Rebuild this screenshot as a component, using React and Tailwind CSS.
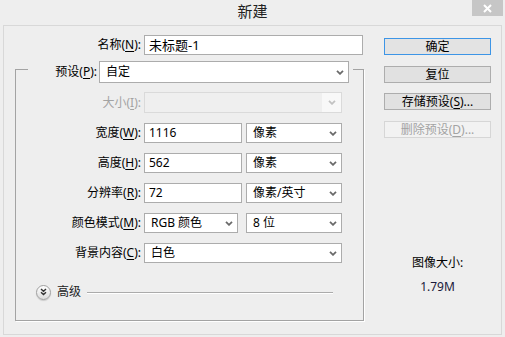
import React from "react";

const Chevron = ({ c = "#6a6a6a" }) => (
  <svg width="8" height="5" viewBox="0 0 8 5" className="shrink-0">
    <path d="M1 0.8L4 3.8L7 0.8" fill="none" stroke={c} strokeWidth="1.8" />
  </svg>
);

const Input = ({ w, children }) => (
  <div className={`h-[20px] ${w} border border-[#acacac] bg-white flex items-center pl-[4px] text-black`}>
    {children}
  </div>
);

const Select = ({ w, h = "h-[20px]", children }) => (
  <div className={`${h} ${w} border border-[#acacac] bg-white flex items-center justify-between pl-[6px] pr-[4px] text-black`}>
    <span>{children}</span>
    <Chevron />
  </div>
);

const Row = ({ label, children, mt = "mt-[10px]", disabled = false, h = "h-[20px]" }) => (
  <div className={`flex items-center ${h} ${mt}`}>
    <div className={`w-[125px] text-right shrink-0 ${disabled ? "text-[#a3a3a3]" : "text-black"}`}>{label}</div>
    <div className="ml-[3px] flex items-center">{children}</div>
  </div>
);

const U = ({ children }) => <u className="underline underline-offset-2">{children}</u>;

export default function App() {
  return (
    <div className="w-[505px] h-[337px] bg-[#eeeeee] flex flex-col text-[12px] leading-none font-['Noto_Sans','Noto_Sans_CJK_SC',sans-serif] text-black overflow-hidden">
      {/* title bar */}
      <div className="grid grid-cols-[1fr_auto_1fr] h-[25px] shrink-0">
        <div />
        <div className="self-center text-[15px] text-[#222] pb-[2px]">新建</div>
        <div className="justify-self-end self-start mr-[2px] w-[31px] h-[16px] bg-[#c6c6c6] flex items-center justify-center">
          <svg width="9" height="9" viewBox="0 0 9 9">
            <path d="M1 1L8 8M8 1L1 8" stroke="#ffffff" strokeWidth="2" />
          </svg>
        </div>
      </div>

      {/* frame */}
      <div className="mx-[3px] h-[310px] border border-[#d8d8d8] flex">
        {/* left column */}
        <div className="w-[360px] pl-[11px] pt-[9px] flex flex-col shrink-0">
          <div className="flex items-center h-[20px]">
            <div className="w-[126px] text-right shrink-0">名称(<U>N</U>):</div>
            <div className="ml-[3px]">
              <Input w="w-[219px]">
                <span className="text-[13px]">未标题-1</span>
              </Input>
            </div>
          </div>

          {/* group box */}
          <div className="mt-[14px] border border-[#a3a3a3] shadow-[1px_1px_0_#ffffff] flex flex-col pb-[21px]">
            <div className="-mt-[9px] ml-[12px] mr-[10px] h-[22px] bg-[#eeeeee] flex items-center pr-[4px]">
              <div className="w-[69px] text-right shrink-0">预设(<U>P</U>):</div>
              <div className="ml-[2px]">
                <Select w="w-[250px]" h="h-[22px]">自定</Select>
              </div>
            </div>

            <Row label={<>大小(<U>I</U>):</>} mt="mt-[9px]" disabled h="h-[21px]">
              <div className="h-[21px] w-[198px] border border-[#dadada] bg-[#efefef] flex">
                <div className="flex-1" />
                <div className="w-[19px] bg-[#f8f8f8] flex items-center justify-center">
                  <Chevron c="#c2c2c2" />
                </div>
              </div>
            </Row>

            <Row label={<>宽度(<U>W</U>):</>}>
              <Input w="w-[98px]">1116</Input>
              <div className="ml-[4px]">
                <Select w="w-[96px]">像素</Select>
              </div>
            </Row>

            <Row label={<>高度(<U>H</U>):</>}>
              <Input w="w-[98px]">562</Input>
              <div className="ml-[4px]">
                <Select w="w-[96px]">像素</Select>
              </div>
            </Row>

            <Row label={<>分辨率(<U>R</U>):</>}>
              <Input w="w-[98px]">72</Input>
              <div className="ml-[4px]">
                <Select w="w-[96px]">像素/英寸</Select>
              </div>
            </Row>

            <Row label={<>颜色模式(<U>M</U>):</>}>
              <Select w="w-[94px]">RGB 颜色</Select>
              <div className="ml-[8px]">
                <Select w="w-[96px]">8 位</Select>
              </div>
            </Row>

            <Row label={<>背景内容(<U>C</U>):</>}>
              <Select w="w-[198px]">白色</Select>
            </Row>

            {/* advanced */}
            <div className="mt-[22px] h-[14px] flex items-center ml-[20px] mr-[30px]">
              <div className="w-[15px] h-[15px] rounded-full border border-[#a0a0a0] bg-gradient-to-b from-[#ffffff] to-[#dcdcdc] shadow-[0_1px_1px_rgba(0,0,0,0.15)] flex items-center justify-center shrink-0">
                <svg width="7" height="8" viewBox="0 0 7 8">
                  <path d="M1 1L3.5 3.3L6 1M1 4.3L3.5 6.6L6 4.3" fill="none" stroke="#333" strokeWidth="1.4" />
                </svg>
              </div>
              <div className="ml-[6px] text-[#222]">高级</div>
              <div className="ml-[6px] flex-1 h-[1px] bg-[#ababab] shadow-[0_1px_0_#ffffff]" />
            </div>
          </div>
        </div>

        {/* right column */}
        <div className="ml-[20px] w-[107px] pt-[12px] flex flex-col">
          <div className="h-[17px] border border-[#3d95e6] bg-[#e3e3e3] flex items-center justify-center">确定</div>
          <div className="mt-[11px] h-[17px] border border-[#adadad] bg-[#e1e1e1] flex items-center justify-center">复位</div>
          <div className="mt-[10px] h-[17px] border border-[#adadad] bg-[#e1e1e1] flex items-center justify-center">
            存储预设(<U>S</U>)...
          </div>
          <div className="mt-[11px] h-[17px] border border-[#d6d6d6] bg-[#f2f2f2] flex items-center justify-center text-[#a3a3a3]">
            删除预设(<U>D</U>)...
          </div>
          <div className="mt-[117px] h-[16px] flex items-center justify-center">图像大小:</div>
          <div className="mt-[8px] h-[16px] flex items-center justify-center text-[#1a1a3a]">1.79M</div>
        </div>
      </div>
    </div>
  );
}
